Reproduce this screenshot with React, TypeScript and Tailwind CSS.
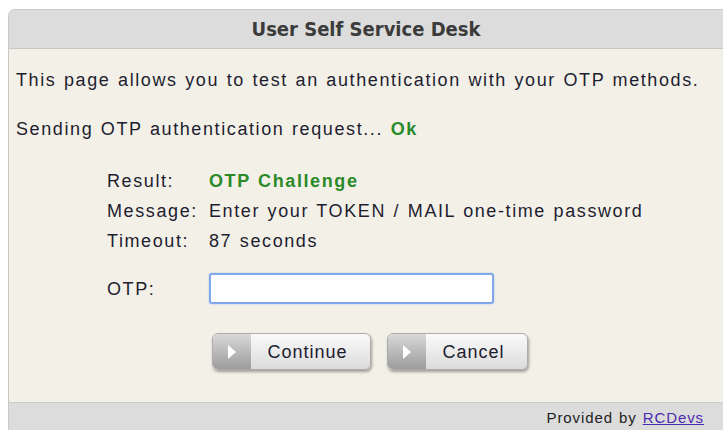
import { ReactNode } from "react";

const bodyFont = {
  fontFamily: '"Liberation Sans", Arial, sans-serif',
  letterSpacing: "1.6px",
  wordSpacing: "1px",
};

const InfoRow = ({ label, children }: { label: string; children: ReactNode }) => (
  <div className="flex h-[30px] items-center">
    <span className="w-[102px]">{label}</span>
    <span>{children}</span>
  </div>
);

const ArrowButton = ({ label, width }: { label: string; width: string }) => (
  <button
    className={`flex h-[37px] ${width} overflow-hidden rounded-[6px] border border-[#acacac] bg-gradient-to-b from-[#fafafa] to-[#dcdcdc] text-[18px] text-[#1c1c30] shadow-[1px_2px_3px_rgba(0,0,0,0.35)]`}
  >
    <span className="flex h-full w-[38px] items-center justify-center bg-gradient-to-b from-[#d9d9d9] to-[#9c9c9c]">
      <svg width="10" height="16" viewBox="0 0 10 16">
        <path d="M1 1 L9 8 L1 15 Z" fill="#fff" />
      </svg>
    </span>
    <span className="flex flex-1 items-center justify-center pr-[6px]" style={{ letterSpacing: "1px" }}>
      {label}
    </span>
  </button>
);

export default function App() {
  return (
    <div className="h-[430px] w-[723px] overflow-hidden bg-white pl-[8px] pt-[9px]" style={bodyFont}>
      <div className="flex h-[440px] flex-col overflow-hidden rounded-tl-[7px] border-l border-t border-[#c8c8c8] bg-[#f3f0e8]">
        <div className="flex h-[39px] shrink-0 items-center justify-center border-b border-[#c6c6c6] bg-[#dcdcdc]">
          <span
            className="text-[20px] font-bold text-[#3b3b3b]"
            style={{
              fontFamily: '"Liberation Sans Narrow", "DejaVu Sans Condensed", "Liberation Sans", sans-serif',
              fontStretch: "condensed",
              letterSpacing: "0px",
              wordSpacing: "0px",
            }}
          >
            User Self Service Desk
          </span>
        </div>

        <div className="flex-1 pl-[7px] text-[18px] leading-[22px] text-[#1e1e30]">
          <p className="mt-[20px]">This page allows you to test an authentication with your OTP methods.</p>
          <p className="mt-[27px]">
            Sending OTP authentication request... <span className="font-bold text-[#2a8a2a]">Ok</span>
          </p>

          <div className="ml-[91px] mt-[26px]">
            <InfoRow label="Result:">
              <span className="font-bold text-[#2a8a2a]">OTP Challenge</span>
            </InfoRow>
            <InfoRow label="Message:">Enter your TOKEN / MAIL one-time password</InfoRow>
            <InfoRow label="Timeout:">87 seconds</InfoRow>

            <div className="mt-[17px] flex items-center">
              <span className="w-[102px]">OTP:</span>
              <input
                autoFocus
                className="h-[31px] w-[285px] rounded-[3px] border-2 border-[#80a7e8] bg-white px-1 shadow-[0_0_2px_#9fc0f0] outline-none"
              />
            </div>

            <div className="ml-[105px] mt-[29px] flex gap-[16px]">
              <ArrowButton label="Continue" width="w-[159px]" />
              <ArrowButton label="Cancel" width="w-[141px]" />
            </div>
          </div>
        </div>

        <div
          className="flex h-[47px] shrink-0 items-start justify-end border-t border-[#cacaca] bg-[#dcdcdc] pr-[19px] pt-[6px] text-[15px] leading-[18px] text-[#222]"
          style={{ letterSpacing: "0.9px", wordSpacing: "1px" }}
        >
          Provided by&nbsp;<a href="#" className="text-[#4b2bb0] underline">RCDevs</a>
        </div>
      </div>
    </div>
  );
}
